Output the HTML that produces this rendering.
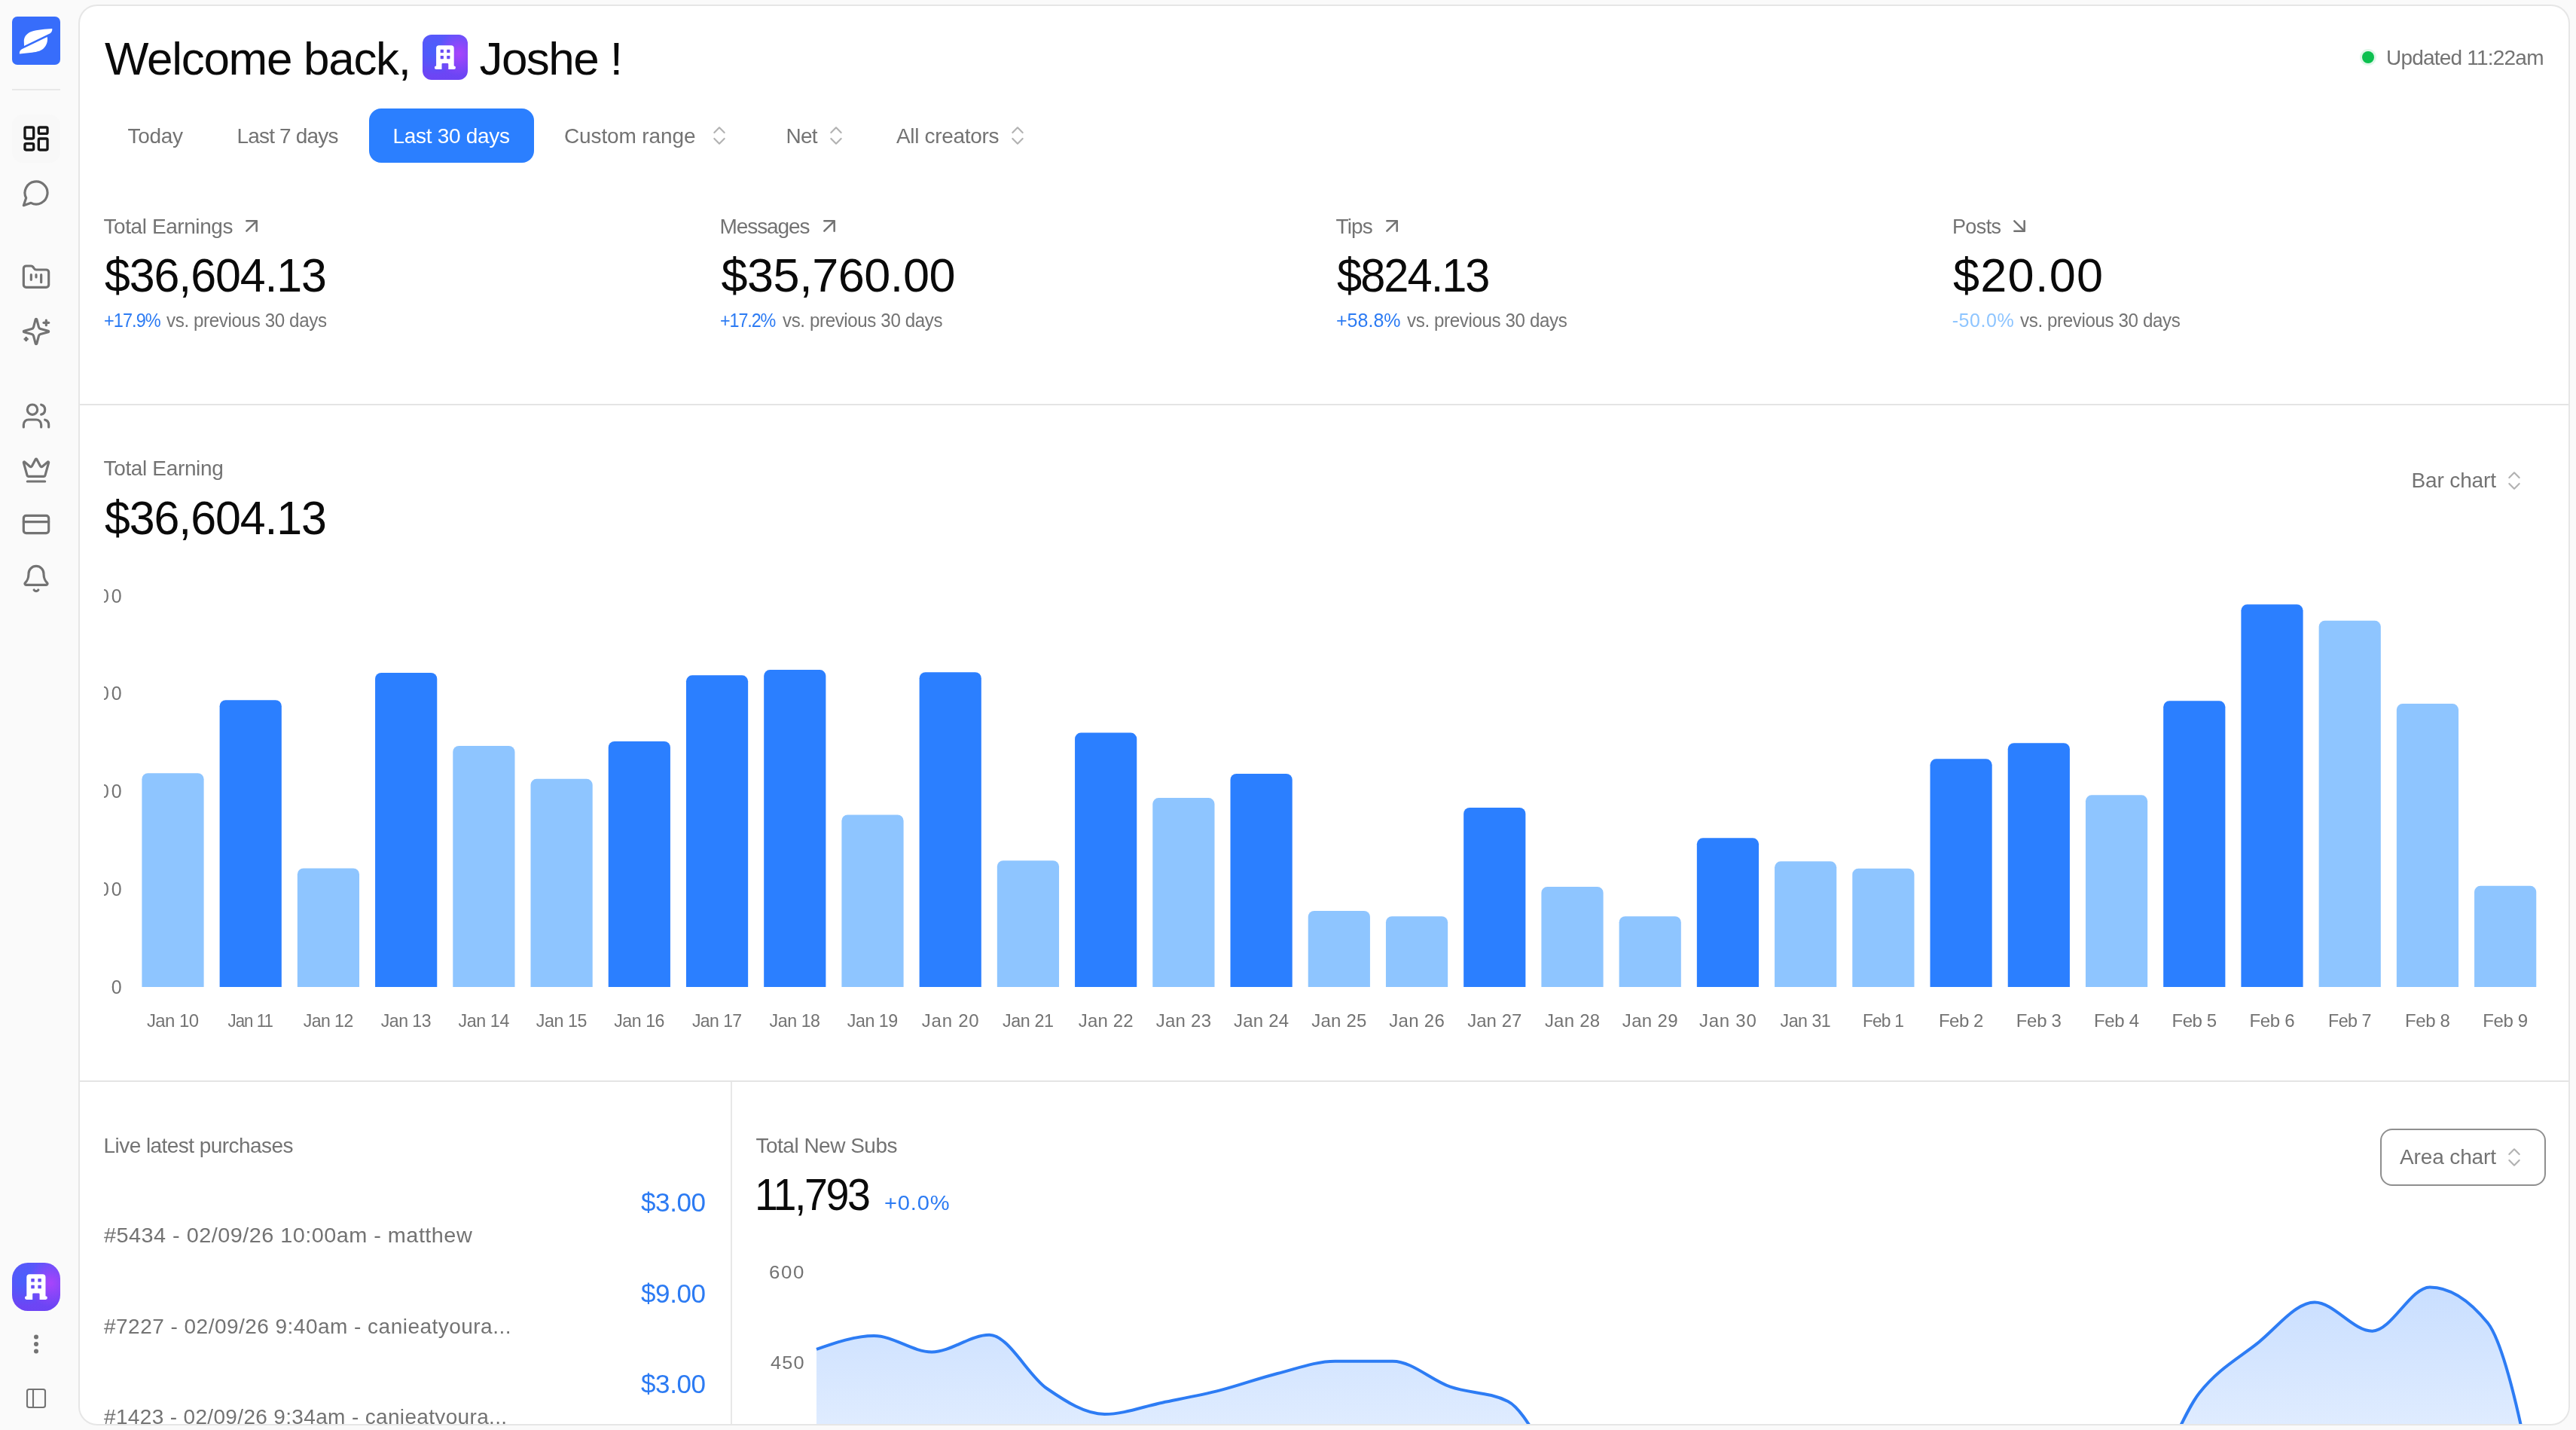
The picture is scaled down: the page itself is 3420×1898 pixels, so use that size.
<!DOCTYPE html>
<html lang="en"><head><meta charset="utf-8"><title>Dashboard</title><style>
html,body{margin:0;padding:0}
body{width:3420px;height:1898px;overflow:hidden;position:relative;background:#fafafa;font-family:"Liberation Sans",sans-serif}
.root{position:absolute;left:0;top:0;width:3420px;height:1898px;will-change:transform}
@media (max-width:2000px){body{width:1710px;height:949px}.root{zoom:.5}}
.t{position:absolute;line-height:1;white-space:nowrap}
.ic{position:absolute;display:block}
.logo{position:absolute;left:16px;top:22px;width:64px;height:64px;border-radius:7px;background:#376dfb;overflow:hidden}
.sdiv{position:absolute;left:16px;top:118px;width:64px;height:2px;background:#e8e8e8}
.nbtn{position:absolute;left:16px;width:64px;height:64px;border-radius:14px;background:#f8f8f8}
.av{position:absolute;background:radial-gradient(circle at 80% 42%,#a844fb 0%,rgba(168,68,251,.55) 22%,rgba(168,68,251,0) 50%),radial-gradient(circle at 26% 36%,#4860fb 0%,rgba(72,96,251,.6) 25%,rgba(72,96,251,0) 55%),linear-gradient(180deg,#6054fa 0%,#6a48f6 55%,#6d44f4 100%)}
.panel{position:absolute;left:104px;top:6px;width:3304px;height:1882px;border:2px solid #e6e6e6;border-radius:25px;background:#fff}
.hl{position:absolute;left:106px;width:3304px;height:2px;background:#e4e4e4}
.vl{position:absolute;left:970px;top:1436px;width:2px;height:454px;background:#e8e8e8}
.dot{position:absolute;left:3136px;top:68px;width:16px;height:16px;border-radius:50%;background:#0cc04f;box-shadow:0 0 0 3px rgba(12,192,79,.12)}
.abtn{position:absolute;left:490px;top:144px;width:219px;height:71.5px;border-radius:16px;background:#2b7fff}
.obtn{position:absolute;left:3160px;top:1498px;width:216px;height:72px;border:2px solid #8f8f8f;border-radius:16px;background:#fff}
</style></head><body>
<div class="root">
<div class="logo"><svg viewBox="0 0 64 64" width="64" height="64"><path fill="#fff" d="M53.3 16 C45 16.7 33.5 17.3 25.5 20 C18.5 22.6 15.6 27.8 15.8 33 L16 39 L50.6 22.2 C52.8 21 53.5 18.6 53.3 16 Z"/><path fill="#fff" d="M9.9 49.6 C9.6 47 10.4 44.6 13 43.2 L46.7 26.9 C47.8 32 46.2 38 41.6 42.4 C37.6 46 31 47.2 24 47.9 Z"/></svg></div>
<div class="sdiv"></div>
<div class="nbtn" style="top:152px"></div>
<svg class="ic" style="left:28.20px;top:163.70px;width:40px;height:40px;color:#171717;" viewBox="0 0 24 24" fill="none" stroke="currentColor" stroke-width="2" stroke-linecap="round" stroke-linejoin="round"><rect width="7" height="9" x="3" y="3" rx="1"/><rect width="7" height="5" x="14" y="3" rx="1"/><rect width="7" height="9" x="14" y="12" rx="1"/><rect width="7" height="5" x="3" y="16" rx="1"/></svg>
<svg class="ic" style="left:28.00px;top:236.00px;width:40px;height:40px;color:#737373;" viewBox="0 0 24 24" fill="none" stroke="currentColor" stroke-width="1.9" stroke-linecap="round" stroke-linejoin="round"><path d="M7.9 20A9 9 0 1 0 4 16.1L2 22Z"/></svg>
<svg class="ic" style="left:28.00px;top:348.00px;width:40px;height:40px;color:#737373;" viewBox="0 0 24 24" fill="none" stroke="currentColor" stroke-width="1.9" stroke-linecap="round" stroke-linejoin="round"><path d="M4 20h16a2 2 0 0 0 2-2V8a2 2 0 0 0-2-2h-7.93a2 2 0 0 1-1.66-.9l-.82-1.2A2 2 0 0 0 7.93 3H4a2 2 0 0 0-2 2v13c0 1.1.9 2 2 2Z"/><path d="M8 10v4"/><path d="M12 10v2"/><path d="M16 10v6"/></svg>
<svg class="ic" style="left:28.00px;top:420.00px;width:40px;height:40px;color:#737373;" viewBox="0 0 24 24" fill="none" stroke="currentColor" stroke-width="1.9" stroke-linecap="round" stroke-linejoin="round"><path d="M9.937 15.5A2 2 0 0 0 8.500 14.063l-6.135-1.582a.5.5 0 0 1 0-.962L8.500 9.936A2 2 0 0 0 9.937 8.500l1.582-6.135a.5.5 0 0 1 .963 0L14.063 8.500A2 2 0 0 0 15.500 9.937l6.135 1.581a.5.5 0 0 1 0 .964L15.500 14.063a2 2 0 0 0-1.437 1.437l-1.582 6.135a.5.5 0 0 1-.963 0z"/><path d="M20 3v4"/><path d="M22 5h-4"/><path d="M4 17v2"/><path d="M5 18H3"/></svg>
<svg class="ic" style="left:28.00px;top:532.00px;width:40px;height:40px;color:#737373;" viewBox="0 0 24 24" fill="none" stroke="currentColor" stroke-width="1.9" stroke-linecap="round" stroke-linejoin="round"><path d="M16 21v-2a4 4 0 0 0-4-4H6a4 4 0 0 0-4 4v2"/><circle cx="9" cy="7" r="4"/><path d="M22 21v-2a4 4 0 0 0-3-3.870"/><path d="M16 3.130a4 4 0 0 1 0 7.750"/></svg>
<svg class="ic" style="left:28.00px;top:603.70px;width:40px;height:40px;color:#737373;" viewBox="0 0 24 24" fill="none" stroke="currentColor" stroke-width="1.9" stroke-linecap="round" stroke-linejoin="round"><path d="M11.562 3.266a.5.5 0 0 1 .876 0L15.390 8.870a1 1 0 0 0 1.516.294L21.183 5.500a.5.5 0 0 1 .798.519l-2.834 10.246a1 1 0 0 1-.956.734H5.810a1 1 0 0 1-.957-.734L2.020 6.020a.5.5 0 0 1 .798-.519l4.276 3.664a1 1 0 0 0 1.516-.294z"/><path d="M5 21h14"/></svg>
<svg class="ic" style="left:28.00px;top:676.00px;width:40px;height:40px;color:#737373;" viewBox="0 0 24 24" fill="none" stroke="currentColor" stroke-width="1.9" stroke-linecap="round" stroke-linejoin="round"><rect width="20" height="14" x="2" y="5" rx="2"/><line x1="2" x2="22" y1="10" y2="10"/></svg>
<svg class="ic" style="left:28.00px;top:748.00px;width:40px;height:40px;color:#737373;" viewBox="0 0 24 24" fill="none" stroke="currentColor" stroke-width="1.9" stroke-linecap="round" stroke-linejoin="round"><path d="M10.268 21a2 2 0 0 0 3.464 0"/><path d="M3.262 15.326A1 1 0 0 0 4 17h16a1 1 0 0 0 .740-1.673C19.410 13.956 18 12.499 18 8A6 6 0 0 0 6 8c0 4.499-1.411 5.956-2.738 7.326"/></svg>
<div class="av" style="left:16px;top:1676px;width:64px;height:64px;border-radius:21px"></div>
<svg class="ic" style="left:16px;top:1676px;width:64px;height:64px" viewBox="0 0 64 64"><path fill="#fff" d="M19.31 19.09 a3.95 3.95 0 0 1 3.95 -3.95 h17.28 a3.95 3.95 0 0 1 3.95 3.95 v25.07 a2.40 2.40 0 0 1 0 4.80 h-7.89 v-7.15 a1.28 1.28 0 0 0 -1.28 -1.28 h-6.83 a1.28 1.28 0 0 0 -1.28 1.28 v7.15 h-7.89 a2.40 2.40 0 0 1 0 -4.80 z"/><rect x="25.28" y="21.12" width="4.48" height="4.48" rx="0.64" fill="#6a4df4"/><rect x="25.28" y="29.87" width="4.48" height="4.48" rx="0.64" fill="#6a4df4"/><rect x="34.35" y="21.12" width="4.48" height="4.48" rx="0.64" fill="#6a4df4"/><rect x="34.35" y="29.87" width="4.48" height="4.48" rx="0.64" fill="#6a4df4"/></svg>
<svg class="ic" style="left:32px;top:1768px;width:32px;height:32px" viewBox="0 0 32 32" fill="#737373"><circle cx="16" cy="6.6" r="3"/><circle cx="16" cy="16" r="3"/><circle cx="16" cy="25.4" r="3"/></svg>
<svg class="ic" style="left:32.00px;top:1840.30px;width:32px;height:32px;color:#737373;" viewBox="0 0 24 24" fill="none" stroke="currentColor" stroke-width="1.6" stroke-linecap="round" stroke-linejoin="round"><rect width="18" height="18" x="3" y="3" rx="2"/><path d="M9 3v18"/></svg>
<div class="panel"></div>
<div class="hl" style="top:536px"></div>
<div class="hl" style="top:1434px"></div>
<div class="vl"></div>
<span class="t" style="top:47.32px;font-size:62px;color:#0a0a0a;letter-spacing:-1.306px;left:139.00px;">Welcome back,</span>
<div class="av" style="left:561px;top:46px;width:60px;height:60px;border-radius:12px"></div>
<svg class="ic" style="left:561px;top:46px;width:60px;height:60px" viewBox="0 0 60 60"><path fill="#fff" d="M18.10 17.90 a3.70 3.70 0 0 1 3.70 -3.70 h16.20 a3.70 3.70 0 0 1 3.70 3.70 v23.50 a2.25 2.25 0 0 1 0 4.50 h-7.40 v-6.70 a1.20 1.20 0 0 0 -1.20 -1.20 h-6.40 a1.20 1.20 0 0 0 -1.20 1.20 v6.70 h-7.40 a2.25 2.25 0 0 1 0 -4.50 z"/><rect x="23.70" y="19.80" width="4.20" height="4.20" rx="0.60" fill="#6a4df4"/><rect x="23.70" y="28.00" width="4.20" height="4.20" rx="0.60" fill="#6a4df4"/><rect x="32.20" y="19.80" width="4.20" height="4.20" rx="0.60" fill="#6a4df4"/><rect x="32.20" y="28.00" width="4.20" height="4.20" rx="0.60" fill="#6a4df4"/></svg>
<span class="t" style="top:47.32px;font-size:62px;color:#0a0a0a;letter-spacing:-1.566px;left:636.50px;">Joshe !</span>
<div class="dot"></div>
<span class="t" style="top:63.30px;font-size:28px;color:#737373;letter-spacing:-0.790px;left:3168.00px;">Updated 11:22am</span>
<div class="abtn"></div>
<span class="t" style="top:166.50px;font-size:28px;color:#737373;letter-spacing:-0.307px;left:169.50px;">Today</span>
<span class="t" style="top:166.50px;font-size:28px;color:#737373;letter-spacing:-0.821px;left:314.50px;">Last 7 days</span>
<span class="t" style="top:166.50px;font-size:28px;color:#fff;letter-spacing:-0.299px;left:521.50px;">Last 30 days</span>
<span class="t" style="top:166.50px;font-size:28px;color:#737373;letter-spacing:-0.125px;left:749.00px;">Custom range</span>
<svg class="ic" style="left:938.60px;top:164.00px;width:32px;height:32px;color:#b2b2b2;" viewBox="0 0 24 24" fill="none" stroke="currentColor" stroke-width="1.6" stroke-linecap="round" stroke-linejoin="round"><path d="m7 15 5 5 5-5"/><path d="m7 9 5-5 5 5"/></svg>
<span class="t" style="top:166.50px;font-size:28px;color:#737373;letter-spacing:-0.789px;left:1043.50px;">Net</span>
<svg class="ic" style="left:1094.00px;top:164.00px;width:32px;height:32px;color:#b2b2b2;" viewBox="0 0 24 24" fill="none" stroke="currentColor" stroke-width="1.6" stroke-linecap="round" stroke-linejoin="round"><path d="m7 15 5 5 5-5"/><path d="m7 9 5-5 5 5"/></svg>
<span class="t" style="top:166.50px;font-size:28px;color:#737373;letter-spacing:-0.323px;left:1190.00px;">All creators</span>
<svg class="ic" style="left:1335.00px;top:164.00px;width:32px;height:32px;color:#b2b2b2;" viewBox="0 0 24 24" fill="none" stroke="currentColor" stroke-width="1.6" stroke-linecap="round" stroke-linejoin="round"><path d="m7 15 5 5 5-5"/><path d="m7 9 5-5 5 5"/></svg>
<span class="t" style="top:286.80px;font-size:28px;color:#737373;letter-spacing:-0.420px;left:137.50px;">Total Earnings</span>
<svg class="ic" style="left:318.40px;top:284.00px;width:32px;height:32px;color:#737373;" viewBox="0 0 24 24" fill="none" stroke="currentColor" stroke-width="1.9" stroke-linecap="round" stroke-linejoin="round"><path d="M7 7h10v10"/><path d="M7 17 17 7"/></svg>
<span class="t" style="top:286.80px;font-size:28px;color:#737373;letter-spacing:-1.089px;left:955.50px;">Messages</span>
<svg class="ic" style="left:1084.90px;top:284.00px;width:32px;height:32px;color:#737373;" viewBox="0 0 24 24" fill="none" stroke="currentColor" stroke-width="1.9" stroke-linecap="round" stroke-linejoin="round"><path d="M7 7h10v10"/><path d="M7 17 17 7"/></svg>
<span class="t" style="top:286.80px;font-size:28px;color:#737373;letter-spacing:-0.854px;left:1773.50px;">Tips</span>
<svg class="ic" style="left:1832.00px;top:284.00px;width:32px;height:32px;color:#737373;" viewBox="0 0 24 24" fill="none" stroke="currentColor" stroke-width="1.9" stroke-linecap="round" stroke-linejoin="round"><path d="M7 7h10v10"/><path d="M7 17 17 7"/></svg>
<span class="t" style="top:286.80px;font-size:28px;color:#737373;letter-spacing:-0.641px;transform:scaleX(0.9634);transform-origin:0 0;left:2591.50px;">Posts</span>
<svg class="ic" style="left:2665.30px;top:284.00px;width:32px;height:32px;color:#737373;" viewBox="0 0 24 24" fill="none" stroke="currentColor" stroke-width="1.9" stroke-linecap="round" stroke-linejoin="round"><path d="m7 7 10 10"/><path d="M17 7v10H7"/></svg>
<span class="t" style="top:334.27px;font-size:63px;color:#0a0a0a;letter-spacing:-1.148px;transform:scaleX(0.9672);transform-origin:0 0;left:139.00px;">$36,604.13</span>
<span class="t" style="top:334.27px;font-size:63px;color:#0a0a0a;letter-spacing:-0.480px;left:957.50px;">$35,760.00</span>
<span class="t" style="top:334.27px;font-size:63px;color:#0a0a0a;letter-spacing:-2.077px;transform:scaleX(0.9453);transform-origin:0 0;left:1775.00px;">$824.13</span>
<span class="t" style="top:334.27px;font-size:63px;color:#0a0a0a;letter-spacing:1.260px;left:2593.00px;">$20.00</span>
<span class="t" style="top:412.64px;font-size:25px;color:#2c7bf3;letter-spacing:-0.998px;transform:scaleX(0.9417);transform-origin:0 0;left:138.00px;">+17.9%</span>
<span class="t" style="top:412.64px;font-size:25px;color:#737373;letter-spacing:-0.398px;transform:scaleX(0.9668);transform-origin:0 0;left:221.00px;">vs. previous 30 days</span>
<span class="t" style="top:412.64px;font-size:25px;color:#2c7bf3;letter-spacing:-1.158px;transform:scaleX(0.9323);transform-origin:0 0;left:956.30px;">+17.2%</span>
<span class="t" style="top:412.64px;font-size:25px;color:#737373;letter-spacing:-0.412px;transform:scaleX(0.9657);transform-origin:0 0;left:1039.40px;">vs. previous 30 days</span>
<span class="t" style="top:412.64px;font-size:25px;color:#2c7bf3;letter-spacing:0.023px;left:1774.00px;">+58.8%</span>
<span class="t" style="top:412.64px;font-size:25px;color:#737373;letter-spacing:-0.404px;transform:scaleX(0.9663);transform-origin:0 0;left:1867.50px;">vs. previous 30 days</span>
<span class="t" style="top:412.64px;font-size:25px;color:#8ec5ff;letter-spacing:0.559px;left:2591.70px;">-50.0%</span>
<span class="t" style="top:412.64px;font-size:25px;color:#737373;letter-spacing:-0.404px;transform:scaleX(0.9663);transform-origin:0 0;left:2681.60px;">vs. previous 30 days</span>
<span class="t" style="top:608.30px;font-size:28px;color:#737373;letter-spacing:-0.346px;left:137.50px;">Total Earning</span>
<span class="t" style="top:655.67px;font-size:63px;color:#0a0a0a;letter-spacing:-1.148px;transform:scaleX(0.9672);transform-origin:0 0;left:139.00px;">$36,604.13</span>
<span class="t" style="top:624.30px;font-size:28px;color:#737373;letter-spacing:-0.139px;left:3201.50px;">Bar chart</span>
<svg class="ic" style="left:3321.80px;top:621.80px;width:32px;height:32px;color:#b2b2b2;" viewBox="0 0 24 24" fill="none" stroke="currentColor" stroke-width="1.6" stroke-linecap="round" stroke-linejoin="round"><path d="m7 15 5 5 5-5"/><path d="m7 9 5-5 5 5"/></svg>
<svg class="ic" style="left:138px;top:760px;width:3250px;height:640px;overflow:hidden" viewBox="138 760 3250 640"><g font-family="Liberation Sans, sans-serif" font-size="24" fill="#737373"><text x="164.6" y="799.5" text-anchor="end" font-size="25" letter-spacing="2.9">2000</text><text x="164.6" y="929.4" text-anchor="end" font-size="25" letter-spacing="2.9">1500</text><text x="164.6" y="1059.3" text-anchor="end" font-size="25" letter-spacing="2.9">1000</text><text x="164.6" y="1189.2" text-anchor="end" font-size="25" letter-spacing="2.9">500</text><text x="164.6" y="1319.1" text-anchor="end" font-size="25" letter-spacing="2.9">0</text><path fill="#8ec5ff" d="M188.40 1310.0 V1034.20 a8 8 0 0 1 8 -8 h66.20 a8 8 0 0 1 8 8 V1310.0 Z"/><path fill="#2b7fff" d="M291.62 1310.0 V937.20 a8 8 0 0 1 8 -8 h66.20 a8 8 0 0 1 8 8 V1310.0 Z"/><path fill="#8ec5ff" d="M394.84 1310.0 V1160.40 a8 8 0 0 1 8 -8 h66.20 a8 8 0 0 1 8 8 V1310.0 Z"/><path fill="#2b7fff" d="M498.07 1310.0 V900.90 a8 8 0 0 1 8 -8 h66.20 a8 8 0 0 1 8 8 V1310.0 Z"/><path fill="#8ec5ff" d="M601.29 1310.0 V998.00 a8 8 0 0 1 8 -8 h66.20 a8 8 0 0 1 8 8 V1310.0 Z"/><path fill="#8ec5ff" d="M704.51 1310.0 V1041.80 a8 8 0 0 1 8 -8 h66.20 a8 8 0 0 1 8 8 V1310.0 Z"/><path fill="#2b7fff" d="M807.73 1310.0 V991.90 a8 8 0 0 1 8 -8 h66.20 a8 8 0 0 1 8 8 V1310.0 Z"/><path fill="#2b7fff" d="M910.95 1310.0 V904.30 a8 8 0 0 1 8 -8 h66.20 a8 8 0 0 1 8 8 V1310.0 Z"/><path fill="#2b7fff" d="M1014.18 1310.0 V897.10 a8 8 0 0 1 8 -8 h66.20 a8 8 0 0 1 8 8 V1310.0 Z"/><path fill="#8ec5ff" d="M1117.40 1310.0 V1089.40 a8 8 0 0 1 8 -8 h66.20 a8 8 0 0 1 8 8 V1310.0 Z"/><path fill="#2b7fff" d="M1220.62 1310.0 V900.20 a8 8 0 0 1 8 -8 h66.20 a8 8 0 0 1 8 8 V1310.0 Z"/><path fill="#8ec5ff" d="M1323.84 1310.0 V1150.20 a8 8 0 0 1 8 -8 h66.20 a8 8 0 0 1 8 8 V1310.0 Z"/><path fill="#2b7fff" d="M1427.06 1310.0 V980.60 a8 8 0 0 1 8 -8 h66.20 a8 8 0 0 1 8 8 V1310.0 Z"/><path fill="#8ec5ff" d="M1530.29 1310.0 V1067.10 a8 8 0 0 1 8 -8 h66.20 a8 8 0 0 1 8 8 V1310.0 Z"/><path fill="#2b7fff" d="M1633.51 1310.0 V1035.00 a8 8 0 0 1 8 -8 h66.20 a8 8 0 0 1 8 8 V1310.0 Z"/><path fill="#8ec5ff" d="M1736.73 1310.0 V1217.00 a8 8 0 0 1 8 -8 h66.20 a8 8 0 0 1 8 8 V1310.0 Z"/><path fill="#8ec5ff" d="M1839.95 1310.0 V1224.20 a8 8 0 0 1 8 -8 h66.20 a8 8 0 0 1 8 8 V1310.0 Z"/><path fill="#2b7fff" d="M1943.17 1310.0 V1079.90 a8 8 0 0 1 8 -8 h66.20 a8 8 0 0 1 8 8 V1310.0 Z"/><path fill="#8ec5ff" d="M2046.40 1310.0 V1184.90 a8 8 0 0 1 8 -8 h66.20 a8 8 0 0 1 8 8 V1310.0 Z"/><path fill="#8ec5ff" d="M2149.62 1310.0 V1224.20 a8 8 0 0 1 8 -8 h66.20 a8 8 0 0 1 8 8 V1310.0 Z"/><path fill="#2b7fff" d="M2252.84 1310.0 V1120.30 a8 8 0 0 1 8 -8 h66.20 a8 8 0 0 1 8 8 V1310.0 Z"/><path fill="#8ec5ff" d="M2356.06 1310.0 V1151.30 a8 8 0 0 1 8 -8 h66.20 a8 8 0 0 1 8 8 V1310.0 Z"/><path fill="#8ec5ff" d="M2459.28 1310.0 V1160.70 a8 8 0 0 1 8 -8 h66.20 a8 8 0 0 1 8 8 V1310.0 Z"/><path fill="#2b7fff" d="M2562.51 1310.0 V1015.30 a8 8 0 0 1 8 -8 h66.20 a8 8 0 0 1 8 8 V1310.0 Z"/><path fill="#2b7fff" d="M2665.73 1310.0 V994.20 a8 8 0 0 1 8 -8 h66.20 a8 8 0 0 1 8 8 V1310.0 Z"/><path fill="#8ec5ff" d="M2768.95 1310.0 V1063.30 a8 8 0 0 1 8 -8 h66.20 a8 8 0 0 1 8 8 V1310.0 Z"/><path fill="#2b7fff" d="M2872.17 1310.0 V938.30 a8 8 0 0 1 8 -8 h66.20 a8 8 0 0 1 8 8 V1310.0 Z"/><path fill="#2b7fff" d="M2975.39 1310.0 V810.30 a8 8 0 0 1 8 -8 h66.20 a8 8 0 0 1 8 8 V1310.0 Z"/><path fill="#8ec5ff" d="M3078.62 1310.0 V831.80 a8 8 0 0 1 8 -8 h66.20 a8 8 0 0 1 8 8 V1310.0 Z"/><path fill="#8ec5ff" d="M3181.84 1310.0 V942.10 a8 8 0 0 1 8 -8 h66.20 a8 8 0 0 1 8 8 V1310.0 Z"/><path fill="#8ec5ff" d="M3285.06 1310.0 V1183.80 a8 8 0 0 1 8 -8 h66.20 a8 8 0 0 1 8 8 V1310.0 Z"/><text x="229.21" y="1363.4" text-anchor="middle" font-size="24" letter-spacing="-0.57">Jan 10</text><text x="332.21" y="1363.4" text-anchor="middle" font-size="24" letter-spacing="-1.01" transform="translate(332.72 0) scale(0.9278 1) translate(-332.72 0)">Jan 11</text><text x="435.67" y="1363.4" text-anchor="middle" font-size="24" letter-spacing="-0.55" transform="translate(435.94 0) scale(0.9621 1) translate(-435.94 0)">Jan 12</text><text x="538.89" y="1363.4" text-anchor="middle" font-size="24" letter-spacing="-0.55" transform="translate(539.17 0) scale(0.9621 1) translate(-539.17 0)">Jan 13</text><text x="642.18" y="1363.4" text-anchor="middle" font-size="24" letter-spacing="-0.41" transform="translate(642.39 0) scale(0.9714 1) translate(-642.39 0)">Jan 14</text><text x="745.38" y="1363.4" text-anchor="middle" font-size="24" letter-spacing="-0.45" transform="translate(745.61 0) scale(0.9686 1) translate(-745.61 0)">Jan 15</text><text x="848.59" y="1363.4" text-anchor="middle" font-size="24" letter-spacing="-0.48" transform="translate(848.83 0) scale(0.9664 1) translate(-848.83 0)">Jan 16</text><text x="951.76" y="1363.4" text-anchor="middle" font-size="24" letter-spacing="-0.59" transform="translate(952.05 0) scale(0.9592 1) translate(-952.05 0)">Jan 17</text><text x="1055.04" y="1363.4" text-anchor="middle" font-size="24" letter-spacing="-0.46" transform="translate(1055.28 0) scale(0.9679 1) translate(-1055.28 0)">Jan 18</text><text x="1158.27" y="1363.4" text-anchor="middle" font-size="24" letter-spacing="-0.46" transform="translate(1158.50 0) scale(0.9679 1) translate(-1158.50 0)">Jan 19</text><text x="1262.08" y="1363.4" text-anchor="middle" font-size="24" letter-spacing="0.73">Jan 20</text><text x="1364.74" y="1363.4" text-anchor="middle" font-size="24" letter-spacing="-0.40" transform="translate(1364.94 0) scale(0.9721 1) translate(-1364.94 0)">Jan 21</text><text x="1468.23" y="1363.4" text-anchor="middle" font-size="24" letter-spacing="0.13">Jan 22</text><text x="1571.50" y="1363.4" text-anchor="middle" font-size="24" letter-spacing="0.23">Jan 23</text><text x="1674.72" y="1363.4" text-anchor="middle" font-size="24" letter-spacing="0.23">Jan 24</text><text x="1777.94" y="1363.4" text-anchor="middle" font-size="24" letter-spacing="0.23">Jan 25</text><text x="1881.22" y="1363.4" text-anchor="middle" font-size="24" letter-spacing="0.33">Jan 26</text><text x="1984.29" y="1363.4" text-anchor="middle" font-size="24" letter-spacing="0.03">Jan 27</text><text x="2087.61" y="1363.4" text-anchor="middle" font-size="24" letter-spacing="0.23">Jan 28</text><text x="2190.88" y="1363.4" text-anchor="middle" font-size="24" letter-spacing="0.33">Jan 29</text><text x="2294.30" y="1363.4" text-anchor="middle" font-size="24" letter-spacing="0.73">Jan 30</text><text x="2396.91" y="1363.4" text-anchor="middle" font-size="24" letter-spacing="-0.50" transform="translate(2397.16 0) scale(0.9650 1) translate(-2397.16 0)">Jan 31</text><text x="2499.97" y="1363.4" text-anchor="middle" font-size="24" letter-spacing="-0.82" transform="translate(2500.38 0) scale(0.9467 1) translate(-2500.38 0)">Feb 1</text><text x="2603.35" y="1363.4" text-anchor="middle" font-size="24" letter-spacing="-0.52">Feb 2</text><text x="2706.67" y="1363.4" text-anchor="middle" font-size="24" letter-spacing="-0.32">Feb 3</text><text x="2809.89" y="1363.4" text-anchor="middle" font-size="24" letter-spacing="-0.32">Feb 4</text><text x="2913.06" y="1363.4" text-anchor="middle" font-size="24" letter-spacing="-0.42">Feb 5</text><text x="3016.34" y="1363.4" text-anchor="middle" font-size="24" letter-spacing="-0.32">Feb 6</text><text x="3119.48" y="1363.4" text-anchor="middle" font-size="24" letter-spacing="-0.47" transform="translate(3119.72 0) scale(0.9696 1) translate(-3119.72 0)">Feb 7</text><text x="3222.73" y="1363.4" text-anchor="middle" font-size="24" letter-spacing="-0.42">Feb 8</text><text x="3325.95" y="1363.4" text-anchor="middle" font-size="24" letter-spacing="-0.42">Feb 9</text></g></svg>
<span class="t" style="top:1506.90px;font-size:28px;color:#737373;letter-spacing:-0.553px;left:137.50px;">Live latest purchases</span>
<span class="t" style="top:1578.37px;font-size:35px;color:#2c7bf3;letter-spacing:-0.396px;left:851.00px;">$3.00</span>
<span class="t" style="top:1626.30px;font-size:28px;color:#737373;letter-spacing:0.441px;transform:scaleX(1.0317);transform-origin:0 0;left:138.00px;">#5434 - 02/09/26 10:00am - matthew</span>
<span class="t" style="top:1698.87px;font-size:35px;color:#2c7bf3;letter-spacing:-0.396px;left:851.00px;">$9.00</span>
<span class="t" style="top:1746.80px;font-size:28px;color:#737373;letter-spacing:0.474px;left:138.00px;">#7227 - 02/09/26 9:40am - canieatyoura...</span>
<span class="t" style="top:1819.37px;font-size:35px;color:#2c7bf3;letter-spacing:-0.396px;left:851.00px;">$3.00</span>
<span class="t" style="top:1867.30px;font-size:28px;color:#737373;letter-spacing:0.342px;left:138.00px;height:22.70px;overflow:hidden;">#1423 - 02/09/26 9:34am - canieatyoura...</span>
<span class="t" style="top:1506.90px;font-size:28px;color:#737373;letter-spacing:-0.505px;left:1003.50px;">Total New Subs</span>
<span class="t" style="top:1555.71px;font-size:60px;color:#0a0a0a;letter-spacing:-2.602px;transform:scaleX(0.9274);transform-origin:0 0;left:1002.00px;">11,793</span>
<span class="t" style="top:1582.80px;font-size:28px;color:#2c7bf3;letter-spacing:0.775px;transform:scaleX(1.0387);transform-origin:0 0;left:1174.00px;">+0.0%</span>
<span class="t" style="top:1676.68px;font-size:24px;color:#737373;letter-spacing:1.554px;transform:scaleX(1.0776);transform-origin:0 0;left:1020.50px;">600</span>
<span class="t" style="top:1797.08px;font-size:24px;color:#737373;letter-spacing:1.085px;transform:scaleX(1.0542);transform-origin:0 0;left:1022.50px;">450</span>
<div class="obtn"></div>
<span class="t" style="top:1522.00px;font-size:28px;color:#737373;letter-spacing:-0.132px;left:3186.00px;">Area chart</span>
<svg class="ic" style="left:3321.90px;top:1520.00px;width:32px;height:32px;color:#b2b2b2;" viewBox="0 0 24 24" fill="none" stroke="currentColor" stroke-width="1.6" stroke-linecap="round" stroke-linejoin="round"><path d="m7 15 5 5 5-5"/><path d="m7 9 5-5 5 5"/></svg>
<svg class="ic" style="left:1070px;top:1660px;width:2320px;height:230px;overflow:hidden" viewBox="1070 1660 2320 230"><defs><linearGradient id="ag" x1="0" y1="1700" x2="0" y2="2050" gradientUnits="userSpaceOnUse"><stop offset="0" stop-color="#2b7fff" stop-opacity="0.26"/><stop offset="1" stop-color="#2b7fff" stop-opacity="0.06"/></linearGradient></defs><path d="M1084.00,1790.90C1109.50,1781.95,1135.00,1773.00,1160.50,1773.00C1186.00,1773.00,1211.50,1794.40,1237.00,1794.40C1262.50,1794.40,1288.00,1771.80,1313.50,1771.80C1339.00,1771.80,1364.50,1825.47,1390.00,1843.00C1415.50,1860.53,1441.00,1877.00,1466.50,1877.00C1492.00,1877.00,1517.50,1866.97,1543.00,1861.70C1568.50,1856.43,1594.00,1851.85,1619.50,1845.40C1645.00,1838.95,1670.50,1829.45,1696.00,1823.00C1721.50,1816.55,1747.00,1806.70,1772.50,1806.70C1798.00,1806.70,1823.50,1806.70,1849.00,1806.70C1874.50,1806.70,1900.00,1831.82,1925.50,1840.70C1951.00,1849.58,1976.50,1847.13,2002.00,1860.00C2027.50,1872.87,2053.00,1940.00,2078.50,1960.00C2104.00,1980.00,2129.50,1990.00,2155.00,1990.00C2180.50,1990.00,2206.00,1990.00,2231.50,1990.00C2257.00,1990.00,2282.50,1990.00,2308.00,1990.00C2333.50,1990.00,2359.00,1990.00,2384.50,1990.00C2410.00,1990.00,2435.50,1990.00,2461.00,1990.00C2486.50,1990.00,2512.00,1990.00,2537.50,1990.00C2563.00,1990.00,2588.50,1990.00,2614.00,1990.00C2639.50,1990.00,2665.00,1990.00,2690.50,1990.00C2716.00,1990.00,2741.50,1990.00,2767.00,1990.00C2792.50,1990.00,2818.00,1985.00,2843.50,1975.00C2869.00,1965.00,2894.50,1880.63,2920.00,1848.70C2945.50,1816.77,2971.00,1803.43,2996.50,1783.40C3022.00,1763.37,3047.50,1728.50,3073.00,1728.50C3098.50,1728.50,3124.00,1766.70,3149.50,1766.70C3175.00,1766.70,3200.50,1708.40,3226.00,1708.40C3251.50,1708.40,3277.00,1724.10,3302.50,1755.50C3328.00,1786.90,3353.50,1918.45,3379.00,2050.00L3379,2100L1084,2100Z" fill="url(#ag)"/><path d="M1084.00,1790.90C1109.50,1781.95,1135.00,1773.00,1160.50,1773.00C1186.00,1773.00,1211.50,1794.40,1237.00,1794.40C1262.50,1794.40,1288.00,1771.80,1313.50,1771.80C1339.00,1771.80,1364.50,1825.47,1390.00,1843.00C1415.50,1860.53,1441.00,1877.00,1466.50,1877.00C1492.00,1877.00,1517.50,1866.97,1543.00,1861.70C1568.50,1856.43,1594.00,1851.85,1619.50,1845.40C1645.00,1838.95,1670.50,1829.45,1696.00,1823.00C1721.50,1816.55,1747.00,1806.70,1772.50,1806.70C1798.00,1806.70,1823.50,1806.70,1849.00,1806.70C1874.50,1806.70,1900.00,1831.82,1925.50,1840.70C1951.00,1849.58,1976.50,1847.13,2002.00,1860.00C2027.50,1872.87,2053.00,1940.00,2078.50,1960.00C2104.00,1980.00,2129.50,1990.00,2155.00,1990.00C2180.50,1990.00,2206.00,1990.00,2231.50,1990.00C2257.00,1990.00,2282.50,1990.00,2308.00,1990.00C2333.50,1990.00,2359.00,1990.00,2384.50,1990.00C2410.00,1990.00,2435.50,1990.00,2461.00,1990.00C2486.50,1990.00,2512.00,1990.00,2537.50,1990.00C2563.00,1990.00,2588.50,1990.00,2614.00,1990.00C2639.50,1990.00,2665.00,1990.00,2690.50,1990.00C2716.00,1990.00,2741.50,1990.00,2767.00,1990.00C2792.50,1990.00,2818.00,1985.00,2843.50,1975.00C2869.00,1965.00,2894.50,1880.63,2920.00,1848.70C2945.50,1816.77,2971.00,1803.43,2996.50,1783.40C3022.00,1763.37,3047.50,1728.50,3073.00,1728.50C3098.50,1728.50,3124.00,1766.70,3149.50,1766.70C3175.00,1766.70,3200.50,1708.40,3226.00,1708.40C3251.50,1708.40,3277.00,1724.10,3302.50,1755.50C3328.00,1786.90,3353.50,1918.45,3379.00,2050.00" fill="none" stroke="#2d7cf4" stroke-width="4" stroke-linecap="butt" stroke-linejoin="round"/></svg>
</div>
</body></html>
